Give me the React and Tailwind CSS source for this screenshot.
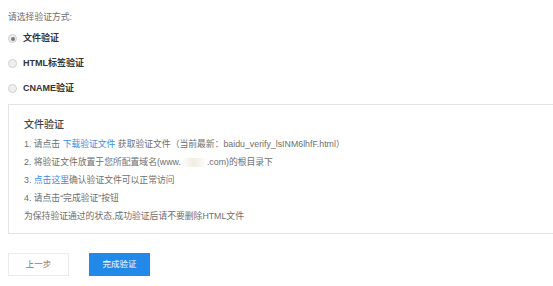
import React, { useState } from "react";

const options = [
  { id: "file", label: "文件验证" },
  { id: "html", label: "HTML标签验证" },
  { id: "cname", label: "CNAME验证" },
];

const Radio = ({ checked }) => (
  <span className="w-[9px] h-[9px] rounded-full border border-[#cfcfcf] bg-[#efefef] flex items-center justify-center shrink-0">
    {checked && <span className="w-[4px] h-[4px] rounded-full bg-[#7a7a7a]" />}
  </span>
);

const App = () => {
  const [method, setMethod] = useState("file");

  return (
    <div
      className="w-[553px] h-[286px] bg-white overflow-hidden pl-2 pt-[11px] text-[#6e6e6e] text-[8.8px]"
      style={{ fontFamily: '"Liberation Sans", "Noto Sans CJK SC", sans-serif' }}
    >
      <div className="h-[13px] leading-[13px]">请选择验证方式:</div>

      <div className="flex flex-col gap-[12px] mt-[8px]">
        {options.map((o) => (
          <label
            key={o.id}
            className="flex items-center gap-[6px] h-[13px] cursor-pointer"
            onClick={() => setMethod(o.id)}
          >
            <Radio checked={method === o.id} />
            <span className="font-bold text-[#333] text-[9px]">{o.label}</span>
          </label>
        ))}
      </div>

      {/* file verify box */}
      <div className="mt-[9px] w-[560px] h-[130px] border border-[#e4e4e4] pl-[15px] pt-[12px]">
        <div className="text-[10px] text-[#444] font-medium leading-[16px]">文件验证</div>
        <div className="flex flex-col mt-[2px] leading-[18px]">
          <div>
            1. 请点击 <span className="text-[#3c8ce8]">下载验证文件</span> 获取验证文件（当前最新：baidu_verify_lsINM6lhfF.html）
          </div>
          <div>
            2. 将验证文件放置于您所配置域名(www.
            <span className="inline-block w-[26px] h-[9px] align-middle bg-gradient-to-r from-white via-[#f1ede2] to-white" />
            .com)的根目录下
          </div>
          <div>
            3. <span className="text-[#3c8ce8]">点击这里</span>确认验证文件可以正常访问
          </div>
          <div>4. 请点击“完成验证”按钮</div>
          <div>为保持验证通过的状态,成功验证后请不要删除HTML文件</div>
        </div>
      </div>

      <div className="flex gap-[20px] mt-[19px]">
        <button className="w-[61px] h-[23px] border border-[#ebebeb] bg-white text-[#777] text-[8.5px]">
          上一步
        </button>
        <button className="w-[61px] h-[23px] bg-[#2289e8] text-white text-[8.5px]">
          完成验证
        </button>
      </div>
    </div>
  );
};

export default App;
